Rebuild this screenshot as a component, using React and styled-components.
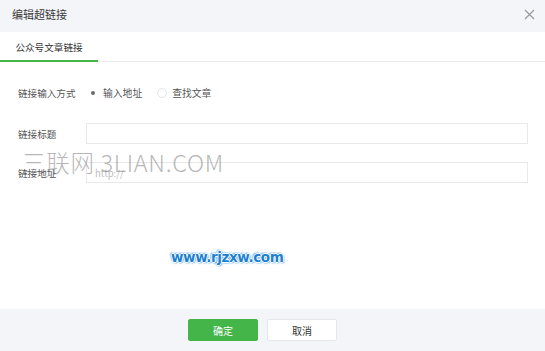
import React, { useState } from "react";
import styled, { createGlobalStyle } from "styled-components";

const GlobalStyle = createGlobalStyle`
  html, body {
    margin: 0;
    padding: 0;
    background: #fff;
  }
  body {
    font-family: "Noto Sans CJK SC", "Noto Sans", sans-serif;
    color: #333;
  }
`;

function Radio({ checked, label, onClick }) {
  return (
    <RadioItem onClick={onClick}>
      <RadioCircle checked={checked} />
      <span>{label}</span>
    </RadioItem>
  );
}

function App() {
  const [mode, setMode] = useState("url");

  return (
    <Dialog>
      <GlobalStyle />
      <Header>
        <Title>编辑超链接</Title>
        <CloseButton aria-label="close">
          <svg width="11" height="11" viewBox="0 0 11 11">
            <path d="M1 1L10 10M10 1L1 10" stroke="#9a9a9a" strokeWidth="1.2" />
          </svg>
        </CloseButton>
      </Header>
      <Tabs>
        <Tab active>公众号文章链接</Tab>
      </Tabs>
      <Body>
        <RadioRow>
          <Label>链接输入方式</Label>
          <RadioGroup>
            <Radio checked={mode === "url"} label="输入地址" onClick={() => setMode("url")} />
            <Radio checked={mode === "search"} label="查找文章" onClick={() => setMode("search")} />
          </RadioGroup>
        </RadioRow>
        <FieldRow>
          <Label>链接标题</Label>
          <Input type="text" />
        </FieldRow>
        <FieldRow>
          <Label>链接地址</Label>
          <Input type="text" placeholder="http://" />
        </FieldRow>
        <Watermark>三联网 3LIAN.COM</Watermark>
        <SiteMark>www.rjzxw.com</SiteMark>
      </Body>
      <Footer>
        <Button primary>确定</Button>
        <Button>取消</Button>
      </Footer>
    </Dialog>
  );
}

const Dialog = styled.div`
  width: 545px;
  height: 351px;
  display: flex;
  flex-direction: column;
  background: #fff;
  overflow: hidden;
`;

const Header = styled.div`
  height: 32px;
  flex: none;
  display: flex;
  align-items: center;
  justify-content: space-between;
  padding: 0 10px 0 12px;
  background: #f4f5f9;
`;

const Title = styled.h3`
  margin: 0;
  font-size: 11px;
  font-weight: 400;
  color: #3a3a3a;
  margin-top: -4px;
`;

const CloseButton = styled.button`
  border: none;
  background: transparent;
  padding: 0;
  display: flex;
  margin-top: -3px;
  cursor: pointer;
`;

const Tabs = styled.div`
  height: 29px;
  flex: none;
  display: flex;
  border-bottom: 1px solid #ececef;
`;

const Tab = styled.div`
  width: 98px;
  display: flex;
  align-items: center;
  justify-content: center;
  font-size: 9.6px;
  color: #333;
  padding-top: 1px;
  border-bottom: 2px solid ${(p) => (p.active ? "#44b549" : "transparent")};
  margin-bottom: -1px;
`;

const Body = styled.div`
  position: relative;
  flex: 1;
  padding: 22px 17px 0 18px;
`;

const Label = styled.span`
  width: 68px;
  flex: none;
  font-size: 9.6px;
  color: #555;
`;

const RadioRow = styled.div`
  display: flex;
  align-items: center;
  height: 18px;
  margin-bottom: 21px;
`;

const RadioGroup = styled.div`
  display: flex;
  align-items: center;
  gap: 15px;
  padding-left: 2px;
`;

const RadioItem = styled.label`
  display: flex;
  align-items: center;
  gap: 5px;
  font-size: 9.8px;
  color: #555;
  cursor: pointer;
`;

const RadioCircle = styled.span`
  width: 10px;
  height: 10px;
  border-radius: 50%;
  box-sizing: border-box;
  border: ${(p) => (p.checked ? "3px solid #fff" : "1px solid #e4e4e4")};
  background: ${(p) => (p.checked ? "#6a6a6a" : "#fff")};
`;

const FieldRow = styled.div`
  display: flex;
  align-items: center;
  margin-bottom: 18px;
`;

const Input = styled.input`
  flex: 1;
  height: 21px;
  box-sizing: border-box;
  border: 1px solid #e9e9ec;
  background: #fff;
  padding: 0 8px;
  font-size: 9.5px;
  font-family: "Noto Sans CJK SC", "Noto Sans", sans-serif;
  outline: none;

  &::placeholder {
    color: #bdbdbd;
  }
`;

const Watermark = styled.div`
  position: absolute;
  left: 22px;
  top: 83px;
  font-size: 23.5px;
  font-weight: 300;
  letter-spacing: 0.7px;
  color: rgba(110, 110, 110, 0.5);
  pointer-events: none;
  white-space: nowrap;
`;

const SiteMark = styled.div`
  position: absolute;
  left: 171px;
  top: 187px;
  font-family: "DejaVu Sans", sans-serif;
  font-size: 13.5px;
  font-weight: 700;
  letter-spacing: -0.4px;
  color: #1d7fd0;
  text-shadow: 1px 0 0 #fff, -1px 0 0 #fff, 0 1px 0 #fff, 0 -1px 0 #fff,
    0 0 2px #2b8ee3, 1px 1px 2px #2b8ee3, -1px -1px 2px #2b8ee3;
  pointer-events: none;
`;

const Footer = styled.div`
  height: 42px;
  flex: none;
  display: flex;
  align-items: center;
  justify-content: center;
  gap: 9px;
  padding-right: 20px;
  background: #f4f5f9;
`;

const Button = styled.button`
  width: 70px;
  height: 22px;
  border-radius: 2px;
  font-size: 10px;
  font-family: "Noto Sans CJK SC", "Noto Sans", sans-serif;
  cursor: pointer;
  border: 1px solid ${(p) => (p.primary ? "#43b548" : "#e4e8eb")};
  background: ${(p) => (p.primary ? "#44b549" : "#fff")};
  color: ${(p) => (p.primary ? "#fff" : "#353535")};
`;

export default App;
